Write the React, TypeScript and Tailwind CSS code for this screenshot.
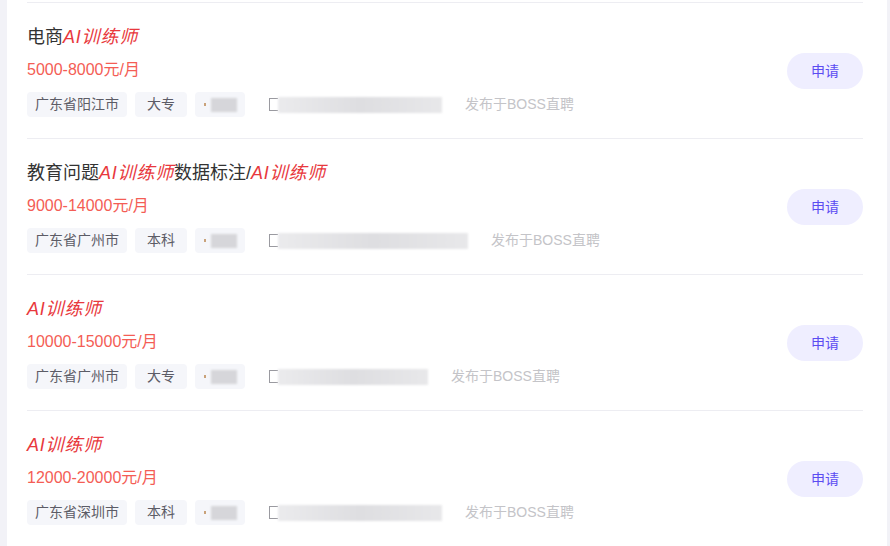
import React from 'react'

type Job = {
  title: { text: string; hl?: boolean }[]
  salary: string
  city: string
  edu: string
  blurW: number
}

const jobs: Job[] = [
  {
    title: [{ text: '电商' }, { text: 'AI训练师', hl: true }],
    salary: '5000-8000元/月',
    city: '广东省阳江市',
    edu: '大专',
    blurW: 164,
  },
  {
    title: [
      { text: '教育问题' },
      { text: 'AI训练师', hl: true },
      { text: '数据标注/' },
      { text: 'AI训练师', hl: true },
    ],
    salary: '9000-14000元/月',
    city: '广东省广州市',
    edu: '本科',
    blurW: 190,
  },
  {
    title: [{ text: 'AI训练师', hl: true }],
    salary: '10000-15000元/月',
    city: '广东省广州市',
    edu: '大专',
    blurW: 150,
  },
  {
    title: [{ text: 'AI训练师', hl: true }],
    salary: '12000-20000元/月',
    city: '广东省深圳市',
    edu: '本科',
    blurW: 164,
  },
]

function JobRow({ job }: { job: Job }) {
  return (
    <div className="flex items-center border-t border-[#ededf2] pt-[22px] pb-[21px]">
      <div className="flex-1 min-w-0">
        <div className="text-[18px] leading-[24px] text-[#333]">
          {job.title.map((t, i) =>
            t.hl ? (
              <span key={i} className="italic tracking-[0.8px] text-[#e8383d]">
                {t.text}
              </span>
            ) : (
              <span key={i}>{t.text}</span>
            )
          )}
        </div>
        <div className="mt-[9px] text-[16px] leading-[24px] text-[#f45d55]">{job.salary}</div>
        <div className="mt-[10px] flex items-center text-[14px] leading-[25px]">
          <span className="h-[25px] rounded-[4px] bg-[#f5f6fa] px-2 text-[#5c5c66]">{job.city}</span>
          <span className="ml-2 h-[25px] rounded-[4px] bg-[#f5f6fa] px-3 text-[#5c5c66]">{job.edu}</span>
          <span className="ml-2 flex h-[25px] w-[50px] items-center rounded-[4px] bg-[#f5f6fa] pl-[9px]">
            <span className="h-[3px] w-[2px] bg-[#c9a27a]" />
            <span className="ml-[5px] h-[14px] w-[26px] bg-[#d6d6da] blur-[1px]" />
          </span>
          <span className="ml-[24px] flex items-center">
            <span className="h-[13px] w-[9px] border border-[#9a9aa0] border-r-0" />
            <span
              className="h-[16px] bg-gradient-to-r from-[#ebebed] via-[#dedee1] to-[#e8e8ea] blur-[1px]"
              style={{ width: job.blurW }}
            />
          </span>
          <span className="ml-[23px] text-[#c4c4c8]">发布于BOSS直聘</span>
        </div>
      </div>
      <button className="h-[36px] w-[76px] rounded-full bg-[#efeeff] text-[14px] text-[#5b4cf2]">申请</button>
    </div>
  )
}

export default function App() {
  return (
    <div
      className="flex h-[546px] w-[890px] overflow-hidden bg-[#f2f2f7]"
      style={{ fontFamily: '"Liberation Sans", "Noto Sans CJK SC", sans-serif' }}
    >
      <div className="ml-[7px] w-[880px] bg-white pt-[2px] pl-[20px] pr-[24px]">
        {jobs.map((job, i) => (
          <JobRow key={i} job={job} />
        ))}
      </div>
    </div>
  )
}
